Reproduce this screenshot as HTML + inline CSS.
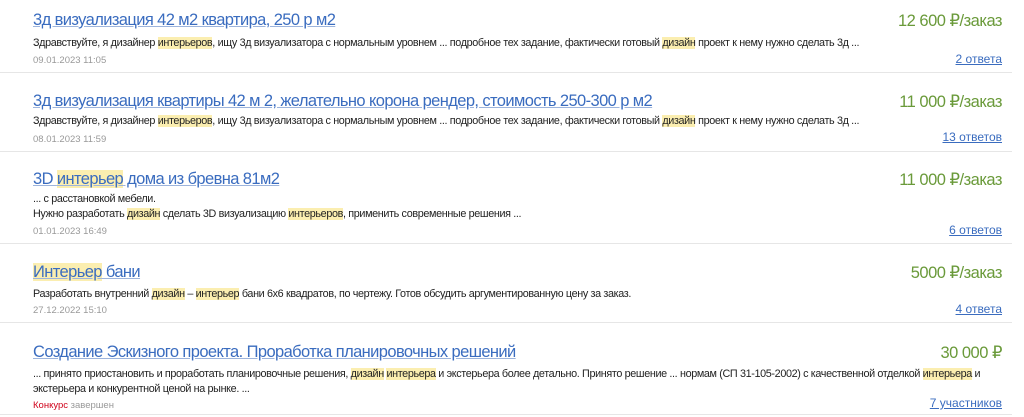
<!DOCTYPE html>
<html><head><meta charset="utf-8"><style>
body{margin:0;width:1024px;height:417px;background:#fff;font-family:"Liberation Sans","DejaVu Sans",sans-serif;position:relative;overflow:hidden}
.a{position:absolute;white-space:nowrap}
.t{left:33px;font-size:16.5px;letter-spacing:-0.6px;color:#3a6cbf;text-decoration:underline;text-decoration-color:#9db4dc}
.s{left:33px;font-size:10.8px;letter-spacing:-0.36px;color:#222}
.d{left:33px;font-size:9.5px;color:#999}
.p{right:22px;font-size:16.5px;letter-spacing:-0.5px;color:#6a9a3a}
.r{right:22px;font-size:12px;color:#3a6cbf;text-decoration:underline}
.h{background:#fbeeb0}
.sep{position:absolute;left:0;width:1012px;height:1px;background:#e6e6e6}
</style></head><body>
<div class="a t" style="top:11px">3д визуализация 42 м2 квартира, 250 р м2</div>
<div class="a p" style="top:11px">12 600 ₽/заказ</div>
<div class="a s" style="top:37px">Здравствуйте, я дизайнер <span class="h">интерьеров</span>, ищу 3д визуализатора с нормальным уровнем ... подробное тех задание, фактически готовый <span class="h">дизайн</span> проект к нему нужно сделать 3д ...</div>
<div class="a d" style="top:55px">09.01.2023 11:05</div>
<div class="a r" style="top:52px">2 ответа</div>
<div class="sep" style="top:72px"></div>

<div class="a t" style="top:92px">3д визуализация квартиры 42 м 2, желательно корона рендер, стоимость 250-300 р м2</div>
<div class="a p" style="top:92px">11 000 ₽/заказ</div>
<div class="a s" style="top:115px">Здравствуйте, я дизайнер <span class="h">интерьеров</span>, ищу 3д визуализатора с нормальным уровнем ... подробное тех задание, фактически готовый <span class="h">дизайн</span> проект к нему нужно сделать 3д ...</div>
<div class="a d" style="top:134px">08.01.2023 11:59</div>
<div class="a r" style="top:130px">13 ответов</div>
<div class="sep" style="top:151px"></div>

<div class="a t" style="top:170px">3D <span class="h">интерьер</span> дома из бревна 81м2</div>
<div class="a p" style="top:170px">11 000 ₽/заказ</div>
<div class="a s" style="top:193px">... с расстановкой мебели.</div>
<div class="a s" style="top:208px">Нужно разработать <span class="h">дизайн</span> сделать 3D визуализацию <span class="h">интерьеров</span>, применить современные решения ...</div>
<div class="a d" style="top:226px">01.01.2023 16:49</div>
<div class="a r" style="top:223px">6 ответов</div>
<div class="sep" style="top:243px"></div>

<div class="a t" style="top:263px"><span class="h">Интерьер</span> бани</div>
<div class="a p" style="top:263px">5000 ₽/заказ</div>
<div class="a s" style="top:288px">Разработать внутренний <span class="h">дизайн</span> – <span class="h">интерьер</span> бани 6х6 квадратов, по чертежу. Готов обсудить аргументированную цену за заказ.</div>
<div class="a d" style="top:305px">27.12.2022 15:10</div>
<div class="a r" style="top:302px">4 ответа</div>
<div class="sep" style="top:322px"></div>

<div class="a t" style="top:343px">Создание Эскизного проекта. Проработка планировочных решений</div>
<div class="a p" style="top:343px">30 000 ₽</div>
<div class="a s" style="top:368px">... принято приостановить и проработать планировочные решения, <span class="h">дизайн</span> <span class="h">интерьера</span> и экстерьера более детально. Принято решение ... нормам (СП 31-105-2002) с качественной отделкой <span class="h">интерьера</span> и</div>
<div class="a s" style="top:383px">экстерьера и конкурентной ценой на рынке. ...</div>
<div class="a d" style="top:400px"><span style="color:#d0021b">Конкурс</span> завершен</div>
<div class="a r" style="top:396px">7 участников</div>
<div class="sep" style="top:414px"></div>
</body></html>
